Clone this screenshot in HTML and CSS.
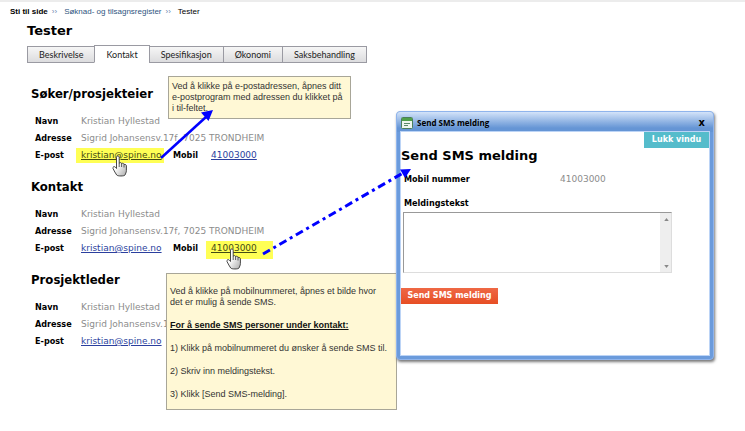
FILE: index.html
```html
<!DOCTYPE html>
<html lang="no">
<head>
<meta charset="utf-8">
<title>Tester</title>
<link rel="stylesheet" href="styles.css">
</head>
<body>
<svg class="defs" aria-hidden="true">
  <defs>
    <linearGradient id="skin" x1="0" y1="0" x2="1" y2="1">
      <stop offset="0.4" stop-color="#fff"/>
      <stop offset="1" stop-color="#aaa"/>
    </linearGradient>
    <symbol id="hand" viewBox="0 0 16 22">
      <path d="M4.500 2.200C4.500 .4 7.200 .4 7.200 2.200V8.200C8 7.200 9.500 7.500 9.600 8.600C10.500 7.900 11.900 8.300 12 9.500C13.200 9 14.400 9.700 14.400 11V15.500C14.400 17.500 13.500 18.500 13 20C12.500 21.300 5.500 21.300 4.700 20C3.800 18.200 1.800 16 1 13.500C.5 11.600 2.500 11 3.500 12.300L4.500 13.500Z" fill="url(#skin)" stroke="#333" stroke-width=".9"/>
      <path d="M7.200 8V12M9.600 8.700V12M12 9.600V12.500" stroke="#333" stroke-width=".8" fill="none"/>
    </symbol>
  </defs>
</svg>
<div class="page">
  <nav class="crumbs" aria-label="Sti til side">
    <b>Sti til side</b><i>››</i><a href="#">Søknad- og tilsagnsregister</a><i>››</i><span>Tester</span>
  </nav>
  <main>
    <h1>Tester</h1>
    <nav class="tabs">
      <a href="#">Beskrivelse</a>
      <a href="#" class="active">Kontakt</a>
      <a href="#">Spesifikasjon</a>
      <a href="#">Økonomi</a>
      <a href="#">Saksbehandling</a>
    </nav>
    <section>
      <h2>Søker/prosjekteier</h2>
      <dl>
        <div><dt>Navn</dt><dd>Kristian Hyllestad</dd></div>
        <div><dt>Adresse</dt><dd>Sigrid Johansensv.17f, 7025 TRONDHEIM</dd></div>
        <div><dt>E-post</dt><dd class="mail"><a href="#" class="marked">kristian@spine.no</a><svg class="hand"><use href="#hand"/></svg></dd><dt class="phone">Mobil</dt><dd><a href="#">41003000</a></dd></div>
      </dl>
    </section>
    <section>
      <h2>Kontakt</h2>
      <dl>
        <div><dt>Navn</dt><dd>Kristian Hyllestad</dd></div>
        <div><dt>Adresse</dt><dd>Sigrid Johansensv.17f, 7025 TRONDHEIM</dd></div>
        <div><dt>E-post</dt><dd class="mail"><a href="#">kristian@spine.no</a></dd><dt class="phone">Mobil</dt><dd class="call"><a href="#" class="marked wide">41003000</a><svg class="hand low"><use href="#hand"/></svg></dd></div>
      </dl>
    </section>
    <section>
      <h2>Prosjektleder</h2>
      <dl>
        <div><dt>Navn</dt><dd>Kristian Hyllestad</dd></div>
        <div><dt>Adresse</dt><dd>Sigrid Johansensv.17f, 7025 TRONDHEIM</dd></div>
        <div><dt>E-post</dt><dd class="mail"><a href="#">kristian@spine.no</a></dd></div>
      </dl>
    </section>
  </main>

  <aside class="note note-mail">Ved å klikke på e-postadressen, åpnes ditt<br>e-postprogram med adressen du klikket på<br>i til-feltet.</aside>

  <aside class="note note-sms">
    <p>Ved å klikke på mobilnummeret, åpnes et bilde hvor<br>det er mulig å sende SMS.</p>
    <p><b>For å sende SMS personer under kontakt:</b></p>
    <p>1) Klikk på mobilnummeret du ønsker å sende SMS til.</p>
    <p>2) Skriv inn meldingstekst.</p>
    <p>3) Klikk [Send SMS-melding].</p>
  </aside>

  <div class="dialog" role="dialog" aria-labelledby="dlg">
    <header>
      <svg viewBox="0 0 12 12" width="12" height="12" aria-hidden="true">
        <rect x=".5" y=".5" width="11" height="11" rx="1" fill="#eef6ee" stroke="#4b7f5a"/>
        <path d="M1 1H11V4H1Z" fill="#4fa04a"/>
        <path d="M3 6.500H9M3 8.500H7" stroke="#5a8a68"/>
      </svg>
      <span id="dlg">Send SMS melding</span>
      <button type="button" class="x" aria-label="Lukk">x</button>
    </header>
    <form class="body">
      <button type="button" class="close">Lukk vindu</button>
      <h2>Send SMS melding</h2>
      <div class="number"><b>Mobil nummer</b><span>41003000</span></div>
      <label for="msg">Meldingstekst</label>
      <div class="field">
        <textarea id="msg"></textarea>
        <svg class="up" viewBox="0 0 6 4" aria-hidden="true"><path d="M0 4L3 0L6 4Z"/></svg>
        <svg class="down" viewBox="0 0 6 4" aria-hidden="true"><path d="M0 0L3 4L6 0Z"/></svg>
      </div>
      <button type="button" class="send">Send SMS melding</button>
    </form>
  </div>

  <svg class="arrows" width="745" height="431" viewBox="0 0 745 431" aria-hidden="true">
    <path d="M161 158L206 117" stroke="#00f" stroke-width="2.500"/>
    <path d="M213 110L208.500 121L201 112.500Z" fill="#00f"/>
    <path d="M263 254L403 173" stroke="#00f" stroke-width="3" stroke-dasharray="8 4 3 4"/>
    <path d="M411 169L405 178L400 169.500Z" fill="#00f"/>
  </svg>
</div>
</body>
</html>
```
FILE: styles.css
```css
* { box-sizing: border-box; }

body {
  margin: 0;
  background: #fff;
  color: #000;
  font: 9px/17px "DejaVu Sans", Verdana, sans-serif;
}

h1, h2, p, dl, dd { margin: 0; }

a { color: #2b3f9e; }

button {
  border: 0;
  padding: 0;
  font: inherit;
}

.defs {
  position: absolute;
  width: 0;
  height: 0;
}

.page {
  position: relative;
  min-height: 100vh;
  border-top: 2px solid #ececec;
}

.crumbs {
  display: flex;
  padding: 4px 10px 0;
  font: 8px/12px "Liberation Sans", Arial, sans-serif;
}

.crumbs a {
  color: #2f5580;
  text-decoration: none;
}

.crumbs i {
  padding: 0 7px 0 4px;
  color: #6a86b0;
  font-style: normal;
}

main { padding: 4px 0 0 27px; }

h1 {
  font-size: 13px;
  line-height: 18px;
}

.tabs {
  display: flex;
  align-items: flex-end;
  margin: 5px 0 21px;
}

.tabs a {
  margin-left: -1px;
  padding: 0 11px;
  border: 1px solid #9a9aa2;
  background: linear-gradient(#f6f6f6, #dcdcde);
  color: #222;
  font: 9px/15px Lato, "Segoe UI", sans-serif;
  text-decoration: none;
}

.tabs a:first-child { margin-left: 0; }

.tabs .active {
  padding-top: 1px;
  background: #fff;
  border-bottom-color: #fff;
}

section { padding: 0 0 13px 4px; }

section h2 {
  margin-bottom: 9px;
  font: bold 13px/20px "DejaVu Sans Condensed", Tahoma, sans-serif;
}

dl { padding-left: 4px; }

dl div {
  display: flex;
  height: 17px;
}

dt, .number b, .body label {
  font-family: "DejaVu Sans Condensed", Tahoma, sans-serif;
  font-weight: bold;
}

dt { width: 46px; }

dd { color: #8c8c8c; }

.mail {
  position: relative;
  width: 92px;
}

.phone { width: 38px; }

.call { position: relative; }

.marked {
  margin: 0 -5px;
  padding: 2px 2px 3px 5px;
  background: #ffff55;
  color: #444b14;
}

.wide {
  padding-right: 16px;
  padding-bottom: 6px;
}

.hand {
  position: absolute;
  left: 31px;
  top: 8px;
  width: 16px;
  height: 22px;
}

.low { left: 15px; }

.note {
  position: absolute;
  border: 1px solid #a8a698;
  background: #fff8d5;
  color: #333;
  font: 9px/11px "Liberation Sans", Arial, sans-serif;
}

.note-mail {
  left: 168px;
  top: 74px;
  width: 183px;
  padding: 4px 3px;
}

.note-sms {
  left: 166px;
  top: 271px;
  width: 231px;
  padding: 12px 3px 9px;
}

.note p + p { margin-top: 12px; }

.note b {
  color: #111;
  text-decoration: underline;
}

.dialog {
  position: absolute;
  left: 396px;
  top: 109px;
  width: 318px;
  padding: 0 4px 4px;
  border: 1px solid #8fb4ec;
  border-radius: 4px;
  background: #6b9bdc;
  box-shadow: 1px 2px 3px #777;
}

.dialog header {
  display: flex;
  align-items: center;
  gap: 4px;
  height: 20px;
  margin: 0 -4px;
  padding: 2px 8px 0 4px;
  border-radius: 3px 3px 0 0;
  background: linear-gradient(#d3e3f9, #6595d5 80%);
  font: bold 8px/16px "Open Sans", "Segoe UI", sans-serif;
}

.x {
  margin-left: auto;
  background: none;
  font: bold 11px/16px "DejaVu Sans Condensed", Verdana, sans-serif;
}

.body {
  display: flow-root;
  height: 223px;
  background: #fff;
  outline: 1px solid #bcd4f6;
}

.close, .send {
  height: 16px;
  color: #fff;
  font-size: 8px;
  font-weight: bold;
  line-height: 16px;
}

.close {
  display: block;
  width: 65px;
  margin-left: auto;
  background: #55bccb;
}

.body h2 {
  font-size: 13px;
  line-height: 16px;
}

.number {
  display: flex;
  margin-top: 7px;
  padding-left: 3px;
}

.number b { width: 156px; }

.number span { color: #8c8c8c; }

.body label {
  display: block;
  margin: 7px 0 0 3px;
}

.field {
  position: relative;
  width: 269px;
  margin: 0 0 15px 2px;
}

textarea {
  display: block;
  width: 100%;
  height: 61px;
  border: 1px solid #ddd;
  border-top: 1px solid #999;
  border-left: 1px solid #999;
  background: linear-gradient(to left, #eee 11px, #fff 11px);
  resize: none;
  overflow: hidden;
}

.up, .down {
  position: absolute;
  right: 3px;
  width: 5px;
  height: 3px;
  fill: #888;
}

.up { top: 6px; }
.down { bottom: 5px; }

.send {
  display: block;
  width: 97px;
  background: linear-gradient(#ef6845, #e74e24);
}

.arrows {
  position: absolute;
  left: 0;
  top: -2px;
  pointer-events: none;
}
```
